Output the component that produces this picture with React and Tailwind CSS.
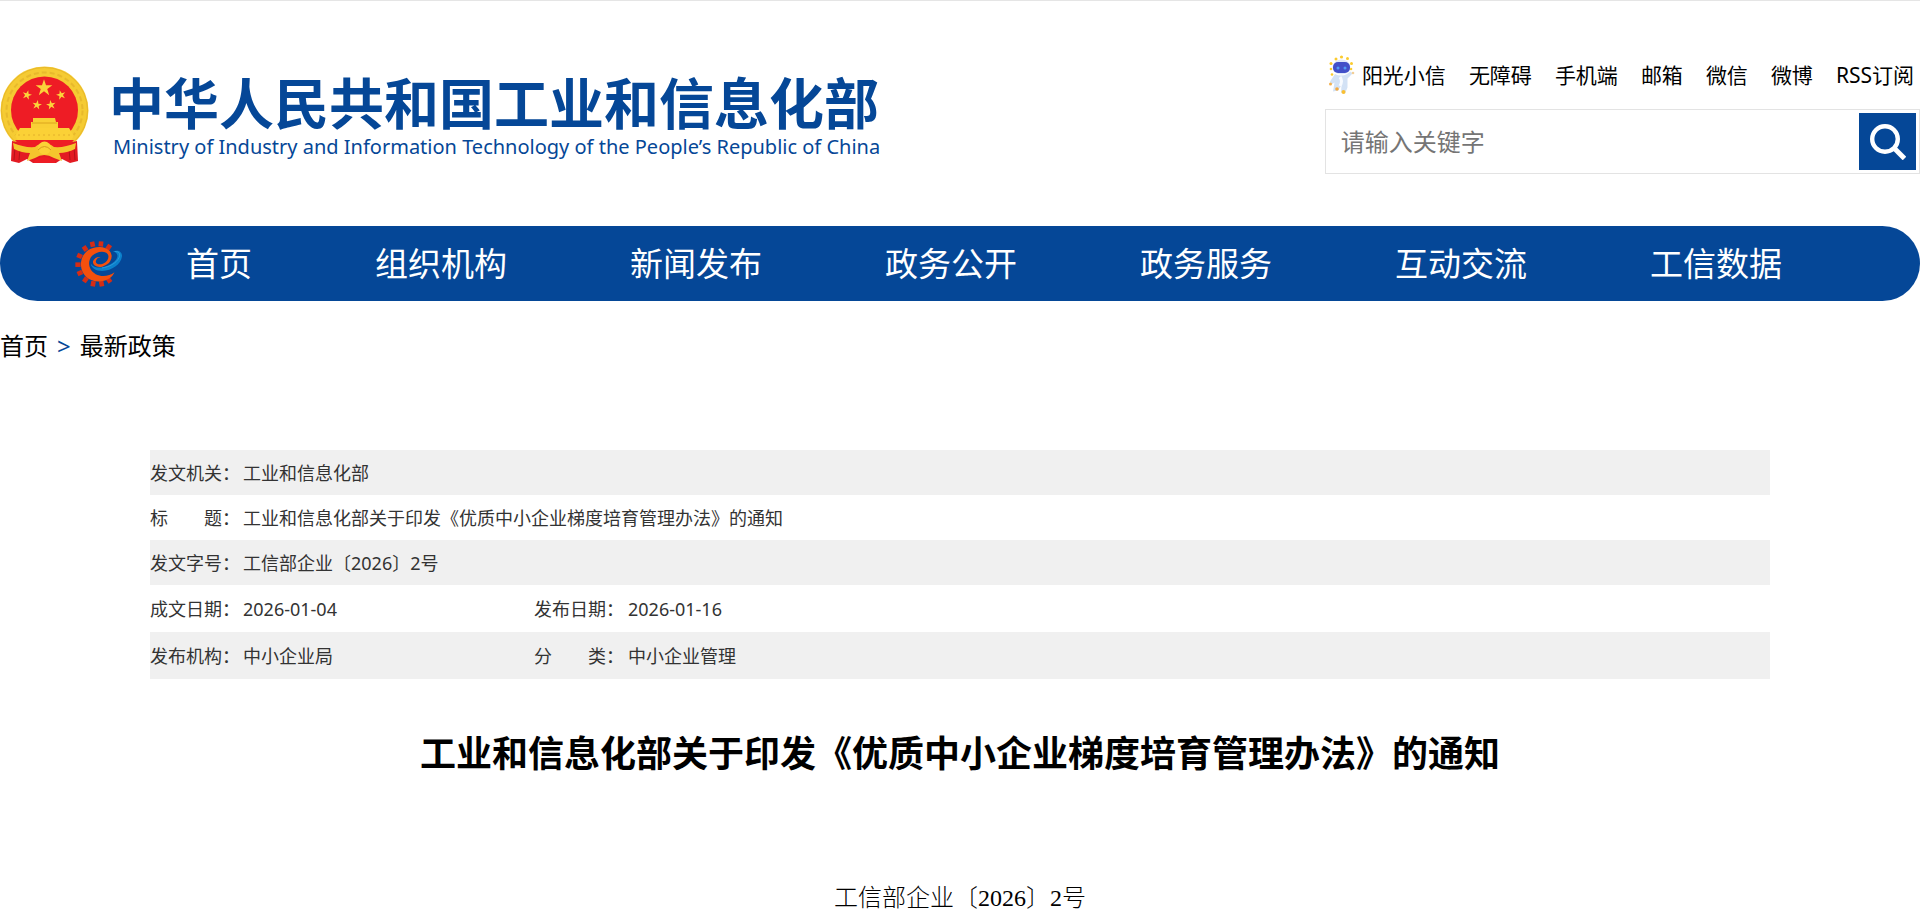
import React from 'react';

const STAR = '0,-10 2.3,-3.1 9.5,-3.1 3.7,1.2 5.9,8.1 0,3.8 -5.9,8.1 -3.7,1.2 -9.5,-3.1 -2.3,-3.1';

const quickLinks = ['阳光小信', '无障碍', '手机端', '邮箱', '微信', '微博', 'RSS订阅'];

const navItems = ['首页', '组织机构', '新闻发布', '政务公开', '政务服务', '互动交流', '工信数据'];

const infoRows = [
  [['发文机关：', '工业和信息化部']],
  [['标\u3000\u3000题：', '工业和信息化部关于印发《优质中小企业梯度培育管理办法》的通知']],
  [['发文字号：', '工信部企业〔2026〕2号']],
  [['成文日期：', '2026-01-04'], ['发布日期：', '2026-01-16']],
  [['发布机构：', '中小企业局'], ['分\u3000\u3000类：', '中小企业管理']],
];

const Emblem = () => (
  <svg viewBox="0 0 89 97" className="w-[89px] h-[97px] shrink-0" aria-hidden="true">
    <circle cx="44.5" cy="44.5" r="44" fill="#f5cb33" />
    <circle cx="44.5" cy="44.5" r="38" fill="none" stroke="#dfae28" strokeWidth="2" strokeDasharray="5 3" opacity="0.6" />
    <circle cx="44.5" cy="44.5" r="43" fill="none" stroke="#e8b82a" strokeWidth="1" />
    <circle cx="44.5" cy="44" r="33.5" fill="#ee1c25" />
    <g fill="#fbd43a">
      <polygon points={STAR} transform="translate(44 22) scale(0.88)" />
      <polygon points={STAR} transform="translate(27 29) rotate(15) scale(0.5)" />
      <polygon points={STAR} transform="translate(61 29) rotate(-15) scale(0.5)" />
      <polygon points={STAR} transform="translate(37 39) rotate(10) scale(0.5)" />
      <polygon points={STAR} transform="translate(51 39) rotate(-10) scale(0.5)" />
    </g>
    <path d="M12 75 L30 79 H59 L77 75 L78 95 L70 97 L62 93 L56 97 H33 L27 93 L19 97 L11 95 Z" fill="#e31b23" />
    <path d="M15 81 l-1 13 M20 83 l-1 11 M74 81 l1 13 M69 83 l1 11" stroke="#b5121b" strokeWidth="1" />
    <path d="M33 52 h22 l1 4 h2 v6 H31 v-6 h2 Z" fill="#f9cf35" />
    <path d="M32 57 h25" stroke="#dca51f" strokeWidth="1" />
    <path d="M20 62 h49 l5 8 -4 6 H19 l-4 -6 Z" fill="#fbd136" />
    <path d="M18 69 h53" stroke="#e3b02a" strokeWidth="1" strokeDasharray="2 3" />
    <path d="M15 74 h59 l-6 7 H21 Z" fill="#ee1c25" />
    <path d="M13 77 q12 5 22 4 q9 -8 19 0 q10 1 22 -4 l-1 6 q-8 4 -16 4 l3 8 -8 -3 q-10 -6 -19 0 l-8 3 3 -8 q-8 0 -16 -4 Z" fill="#f5c62d" />
    <circle cx="44.5" cy="82" r="6.5" fill="#fbd136" />
    <path d="M38 84 q6.5 -7 13 0" stroke="#d89a1e" strokeWidth="1" fill="none" />
    <path d="M34 95 q10 -8 21 0 v2 H34 Z" fill="#ee1c25" />
  </svg>
);

const Robot = () => (
  <svg viewBox="0 0 28 40" className="w-7 h-10 shrink-0" aria-hidden="true">
    <g fill="#fbcb2e">
      <circle cx="8" cy="4" r="1.5" />
      <circle cx="13.5" cy="2" r="1.6" />
      <circle cx="19.5" cy="3.5" r="1.5" />
      <circle cx="3" cy="8.5" r="1.5" />
      <circle cx="23.5" cy="8.5" r="1.5" />
      <circle cx="3" cy="14" r="1.3" />
      <circle cx="4" cy="19.5" r="1.3" />
      <circle cx="23" cy="14" r="1.3" />
    </g>
    <ellipse cx="13.5" cy="12" rx="9" ry="7.5" fill="#dfe9fa" />
    <path d="M7 19 q6 3 12 0 l3.5 -2.5 2 2 -5 5 v9 l-2.5 6 -4 -1 .5 -7 -3.5 5 -5 1 1.5 -9 -3 2 -1.5 -3 Z" fill="#d3e2f5" />
    <path d="M12 22 q3 4 0 9" stroke="#f8fbff" strokeWidth="3" fill="none" />
    <rect x="5" y="7" width="17" height="11" rx="5" fill="#4250c8" />
    <circle cx="10" cy="13" r="1.5" fill="#4f9bf5" />
    <circle cx="17" cy="13" r="1.5" fill="#4f9bf5" />
    <circle cx="25" cy="18" r="1.3" fill="#f3cf96" />
    <circle cx="2.5" cy="29" r="1.5" fill="#f3b04e" />
    <circle cx="9" cy="34" r="1.8" fill="#f3a93e" />
    <circle cx="15.5" cy="37" r="2" fill="#f9bf32" />
  </svg>
);

const GearLogo = () => (
  <svg viewBox="30 32 144 140" className="w-12 h-[46px] shrink-0" aria-hidden="true">
    <g fill="#d62c14">
      <rect x="-7" y="-7" width="14" height="16" transform="translate(82 41) rotate(-12)" />
      <rect x="-7" y="-7" width="14" height="16" transform="translate(108 40) rotate(5)" />
      <rect x="-7" y="-7" width="14" height="16" transform="translate(132 50) rotate(35)" />
      <rect x="-7" y="-7" width="14" height="16" transform="translate(59 54) rotate(-35)" />
      <rect x="-7" y="-7" width="14" height="16" transform="translate(42 77) rotate(-65)" />
      <rect x="-7" y="-7" width="14" height="16" transform="translate(37 104) rotate(-90)" />
      <rect x="-7" y="-7" width="14" height="16" transform="translate(43 130) rotate(-115)" />
      <rect x="-7" y="-7" width="14" height="16" transform="translate(60 151) rotate(-145)" />
      <rect x="-7" y="-7" width="14" height="16" transform="translate(84 163) rotate(-170)" />
      <rect x="-7" y="-7" width="14" height="16" transform="translate(110 163) rotate(170)" />
      <rect x="-7" y="-7" width="14" height="16" transform="translate(133 152) rotate(145)" />
    </g>
    <path
      d="M136 94 C148 74 136 52 105 50 C69 49 46 74 47 105 C48 137 74 157 106 155 C127 153 143 142 149 127 C133 140 109 142 92 133 C74 123 68 103 74 88 C82 69 108 59 124 68 C137 76 130 94 114 101 C99 107 88 99 94 89 C99 81 107 80 111 83 C103 77 88 82 84 93 C81 106 96 114 112 110 C123 107 132 101 136 94 Z"
      fill="#f4500d"
    />
    <path d="M144 64 C162 58 173 66 172 79 C169 103 141 122 112 123 C93 123 79 115 77 101 C84 111 99 115 113 112 C137 107 160 91 158 76 C157 69 152 65 144 64 Z" fill="#0b80cb" />
    <path d="M150 64 C164 63 168 72 163 83 C155 99 134 111 111 114" fill="none" stroke="#3ba7df" strokeWidth="2" />
  </svg>
);

const Header = () => (
  <header className="flex items-start justify-between">
    <a href="#home" className="flex pt-[65px] text-[#054797]">
      <Emblem />
      <span className="ml-5 flex flex-col pt-[9px] whitespace-nowrap">
        <span className="text-[55px] leading-[60px] font-bold font-['Liberation_Sans','Noto_Sans_CJK_SC',sans-serif]">
          中华人民共和国工业和信息化部
        </span>
        <span className="pl-1 text-[20px] leading-6">
          Ministry of Industry and Information Technology of the People’s Republic of China
        </span>
      </span>
    </a>

    <div className="w-[31%] pt-[54px]">
      <nav className="flex items-center justify-end pr-1.5" aria-label="快捷入口">
        <Robot />
        <ul className="ml-1.5 flex gap-[23px] text-[21px] leading-10 whitespace-nowrap">
          {quickLinks.map((item) => (
            <li key={item}>
              <a href="#quick" className="hover:text-[#054797]">{item}</a>
            </li>
          ))}
        </ul>
      </nav>

      <form
        className="mt-[14px] flex items-center border border-[#e3e3e3] p-[3px]"
        onSubmit={(e) => e.preventDefault()}
      >
        <input
          type="search"
          aria-label="请输入关键字"
          placeholder="请输入关键字"
          className="min-w-0 flex-1 h-[57px] pl-3 text-[24px] outline-none placeholder:text-[#757575]"
        />
        <button type="submit" aria-label="搜索" className="flex size-[57px] items-center justify-center bg-[#054797]">
          <svg viewBox="0 0 36 36" className="size-9" fill="none" stroke="white" aria-hidden="true">
            <circle cx="15" cy="15" r="12.8" strokeWidth="4.4" />
            <path d="M24 24 L34.5 34.5" strokeWidth="5" />
          </svg>
        </button>
      </form>
    </div>
  </header>
);

const MainNav = () => (
  <nav className="mt-[52px] flex h-[75px] items-center rounded-full bg-[#054797] pl-[75px] pr-[138px]" aria-label="主导航">
    <GearLogo />
    <ul className="ml-[63px] flex flex-1 justify-between text-[33px] leading-[48px] whitespace-nowrap text-white">
      {navItems.map((item) => (
        <li key={item}>
          <a href="#nav">{item}</a>
        </li>
      ))}
    </ul>
  </nav>
);

const InfoTable = () => (
  <table className="w-full table-fixed border-collapse text-left text-[18px] leading-6 text-[#333]">
    <colgroup>
      <col className="w-[93px]" />
      <col className="w-[291px]" />
      <col className="w-[94px]" />
      <col />
    </colgroup>
    <tbody>
      {infoRows.map((row, i) => (
        <tr key={i} className={`odd:bg-[#f0f0f0] ${row.length > 1 ? 'h-[47px]' : 'h-[45px]'}`}>
          {row.map(([label, value]) => (
            <React.Fragment key={label}>
              <th scope="row" className="p-0 font-normal whitespace-nowrap">{label}</th>
              <td colSpan={row.length > 1 ? 1 : 3} className="p-0">{value}</td>
            </React.Fragment>
          ))}
        </tr>
      ))}
    </tbody>
  </table>
);

const App = () => {
  return (
    <div
      lang="zh-CN"
      className="overflow-x-hidden border-t border-[#e5e5e5] bg-white text-black font-['Noto_Sans','Noto_Sans_CJK_SC',sans-serif]"
    >
      <Header />
      <MainNav />

      <nav className="mt-[27px] flex gap-[9px] text-[24px] leading-9" aria-label="当前位置">
        <a href="#home">首页</a>
        <span className="text-[#054797]">&gt;</span>
        <a href="#policy">最新政策</a>
      </nav>

      <main className="px-[150px] pt-[86px]">
        <InfoTable />
        <h1 className="mt-[51px] text-center text-[36px] leading-[48px] font-bold">
          工业和信息化部关于印发《优质中小企业梯度培育管理办法》的通知
        </h1>
        <p className="mt-[102px] text-center text-[24px] leading-9 font-light font-['Liberation_Serif','Noto_Sans_CJK_SC',serif]">
          工信部企业〔2026〕2号
        </p>
      </main>
    </div>
  );
};

export default App;
